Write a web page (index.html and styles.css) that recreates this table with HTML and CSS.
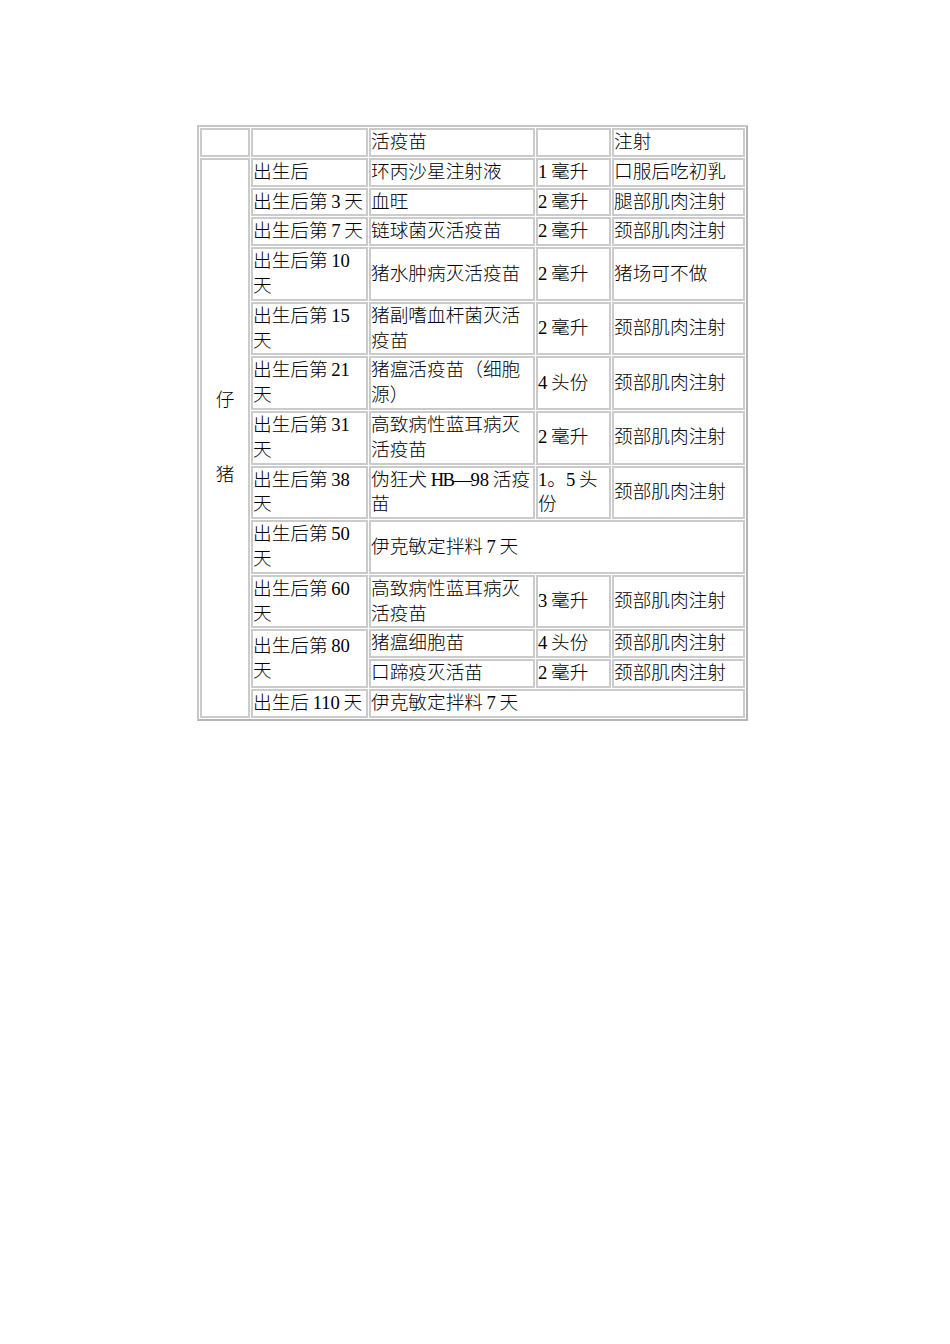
FILE: index.html
```html
<!DOCTYPE html>
<html lang="zh-CN">
<head>
<meta charset="utf-8">
<title>仔猪免疫程序</title>
<link rel="stylesheet" href="styles.css">
</head>
<body>
<div class="page">
<table class="schedule">
<tr>
<td class="c1">&nbsp;</td>
<td class="c2">&nbsp;</td>
<td class="c3">活疫苗</td>
<td class="c4">&nbsp;</td>
<td class="c5">注射</td>
</tr>
<tr>
<td class="group" rowspan="13">仔<br><br><br>猪</td>
<td>出生后</td>
<td>环丙沙星注射液</td>
<td>1 毫升</td>
<td>口服后吃初乳</td>
</tr>
<tr>
<td>出生后第 3 天</td>
<td>血旺</td>
<td>2 毫升</td>
<td>腿部肌肉注射</td>
</tr>
<tr>
<td>出生后第 7 天</td>
<td>链球菌灭活疫苗</td>
<td>2 毫升</td>
<td>颈部肌肉注射</td>
</tr>
<tr>
<td>出生后第 10<br>天</td>
<td>猪水肿病灭活疫苗</td>
<td>2 毫升</td>
<td>猪场可不做</td>
</tr>
<tr>
<td>出生后第 15<br>天</td>
<td>猪副嗜血杆菌灭活<br>疫苗</td>
<td>2 毫升</td>
<td>颈部肌肉注射</td>
</tr>
<tr>
<td>出生后第 21<br>天</td>
<td>猪瘟活疫苗（细胞<br>源）</td>
<td>4 头份</td>
<td>颈部肌肉注射</td>
</tr>
<tr>
<td>出生后第 31<br>天</td>
<td>高致病性蓝耳病灭<br>活疫苗</td>
<td>2 毫升</td>
<td>颈部肌肉注射</td>
</tr>
<tr>
<td>出生后第 38<br>天</td>
<td>伪狂犬 <span class="tight">HB—</span>98 活疫<br>苗</td>
<td>1。5 头<br>份</td>
<td>颈部肌肉注射</td>
</tr>
<tr>
<td>出生后第 50<br>天</td>
<td colspan="3">伊克敏定拌料 7 天</td>
</tr>
<tr>
<td>出生后第 60<br>天</td>
<td>高致病性蓝耳病灭<br>活疫苗</td>
<td>3 毫升</td>
<td>颈部肌肉注射</td>
</tr>
<tr>
<td rowspan="2">出生后第 80<br>天</td>
<td>猪瘟细胞苗</td>
<td>4 头份</td>
<td>颈部肌肉注射</td>
</tr>
<tr>
<td>口蹄疫灭活苗</td>
<td>2 毫升</td>
<td>颈部肌肉注射</td>
</tr>
<tr>
<td>出生后 110 天</td>
<td colspan="3">伊克敏定拌料 7 天</td>
</tr>
</table>
</div>
</body>
</html>
```

FILE: styles.css
```css
html, body {
  margin: 0;
  padding: 0;
  background: #ffffff;
}

.page {
  padding: 125px 0 0 197px;
}

.schedule {
  border-collapse: separate;
  border-spacing: 1px;
  border: 2px solid #c8c8c8;
  border-right-color: #b4b4b4;
  border-bottom-color: #b4b4b4;
  font-family: "Liberation Serif", "Noto Sans CJK SC", serif;
  font-size: 18.67px;
  font-weight: 300;
  line-height: 24.8px;
  color: #000000;
  word-spacing: -1px;
  white-space: nowrap;
}

.schedule td {
  border: 2px solid #cbcbcb;
  padding: 0;
  vertical-align: middle;
  text-align: left;
}

.schedule .c1 { width: 46px; }
.schedule .c2 { width: 113px; }
.schedule .c3 { width: 162px; }
.schedule .c4 { width: 71px; }
.schedule .c5 { width: 129px; }

.schedule .group {
  text-align: center;
}

.tight {
  letter-spacing: -1.6px;
}
```
